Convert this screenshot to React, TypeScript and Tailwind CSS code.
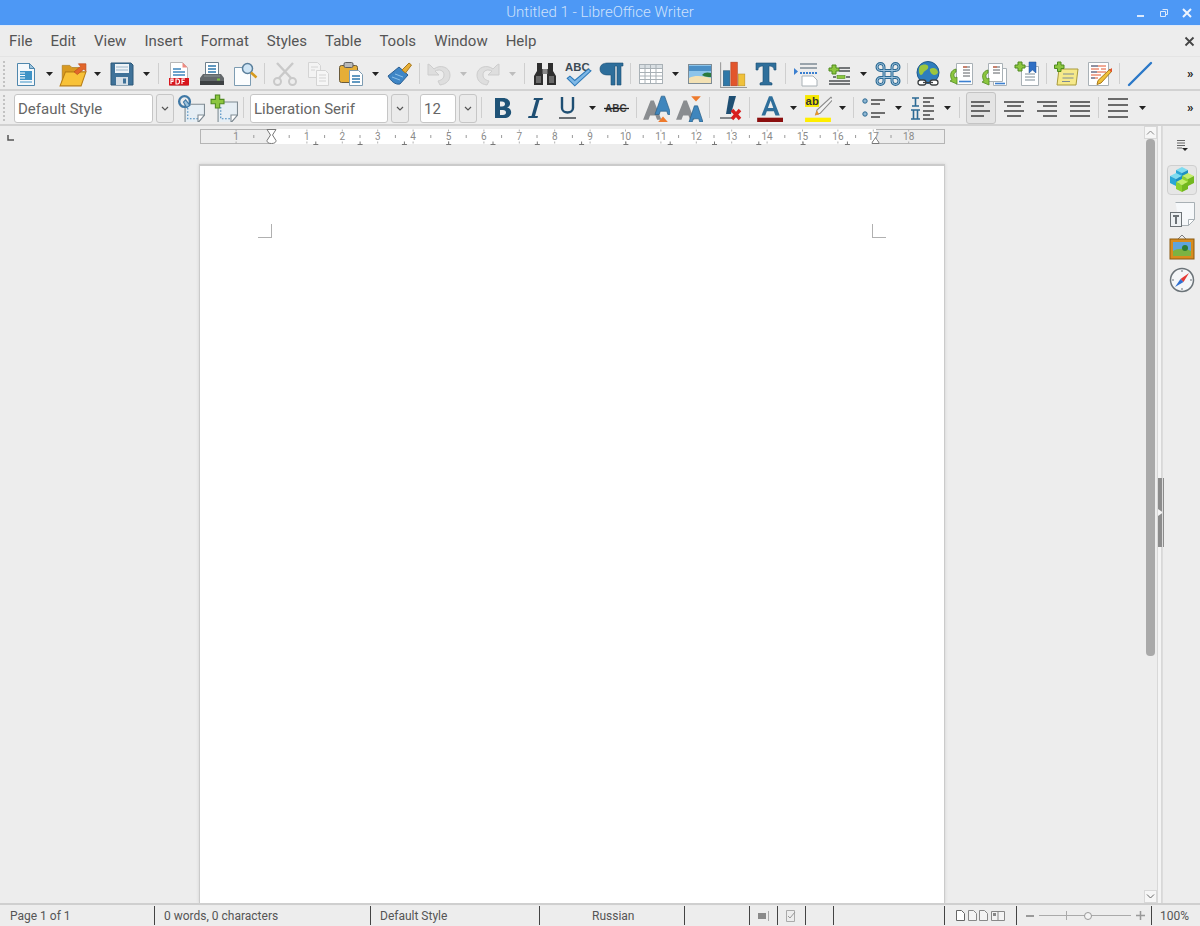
import type { ReactNode } from 'react'

const font = { fontFamily: 'Roboto, "Liberation Sans", sans-serif' }

function Ic({ children, size = 26 }: { children: ReactNode; size?: number }) {
  return (
    <svg width={size} height={size} viewBox="0 0 26 26" className="block">
      {children}
    </svg>
  )
}

function Btn({ children, active }: { children?: ReactNode; active?: boolean }) {
  return (
    <div className="w-[33px] h-[32px] flex items-center justify-center shrink-0">
      {active ? (
        <div className="w-[30px] h-[32px] flex items-center justify-center rounded-[3px] border border-[#c4c4c4] bg-[#e4e4e4]">
          {children}
        </div>
      ) : (
        children
      )}
    </div>
  )
}

function Caret({ off, w = 'w-[16px]' }: { off?: boolean; w?: string }) {
  return (
    <div className={`${w} h-[32px] flex items-center justify-center shrink-0`}>
      <svg width="7" height="4" viewBox="0 0 7 4">
        <path d="M0 0h7L3.5 4z" fill={off ? '#bdbdbd' : '#222'} />
      </svg>
    </div>
  )
}

function Sep({ w = 'w-[7px]' }: { w?: string }) {
  return (
    <div className={`${w} h-[32px] flex items-center justify-center shrink-0`}>
      <div className="w-px h-[21px] bg-[#cfcfcf]" />
    </div>
  )
}

function Grip({ w = 'w-[9px]' }: { w?: string }) {
  return (
    <div className={`${w} h-[26px] shrink-0 flex justify-start pl-[3px]`}>
      <div className="w-[2px] h-full border-l-2 border-dotted border-[#c2c2c2]" />
    </div>
  )
}

function More() {
  return (
    <div className="ml-auto w-[13px] text-[13px] font-bold text-[#222] leading-none tracking-[-1px]">»</div>
  )
}

function Combo({ text, w }: { text: string; w: string }) {
  return (
    <div className={`${w} flex shrink-0 gap-[3px] mt-[2px]`}>
      <div className="flex-1 h-[29px] rounded-[3px] border border-[#c6c6c6] bg-white px-[3px] text-[15px] leading-[29px] text-[#666] overflow-hidden whitespace-nowrap">
        {text}
      </div>
      <div className="w-[18px] h-[29px] rounded-[3px] border border-[#c6c6c6] bg-[#ebebeb] flex items-center justify-center">
        <svg width="8" height="5" viewBox="0 0 8 5">
          <path d="M1 1l3 3 3-3" fill="none" stroke="#555" strokeWidth="1.2" />
        </svg>
      </div>
    </div>
  )
}

/* toolbar icons */

const NewDoc = () => (
  <Ic>
    <path d="M4.500 2.500h12l5 5v17h-17z" fill="#f4f8fb" stroke="#4f87ad" />
    <path d="M16.500 2.500l5 5h-5z" fill="#9cc3dd" stroke="#4f87ad" />
    <rect x="7" y="10" width="12" height="9" fill="#3f93c6" />
    <path d="M7 12h5M7 14.500h5M7 17h5" stroke="#fff" />
    <path d="M7 21h12" stroke="#3f93c6" />
  </Ic>
)

const OpenFolder = () => (
  <Ic size={28}>
    <path d="M3 5h7l2 2h7v15H3z" fill="#d99a20" stroke="#a87614" strokeWidth=".6" />
    <path d="M6 11h19l-4.500 13H1z" fill="#f8c238" stroke="#b97e14" />
    <path d="M14 11l6-5-2-2.500h7v7l-2-2-6 5z" fill="#e2662a" stroke="#b9481a" strokeWidth=".6" />
  </Ic>
)

const Save = () => (
  <Ic>
    <path d="M2 2h20l2 2v20H2z" fill="#3f7299" stroke="#2c5878" />
    <rect x="6" y="3" width="14" height="9" fill="#eef3f7" />
    <path d="M7 6h12M7 9h12" stroke="#9bb6c9" />
    <rect x="7" y="16" width="12" height="8" fill="#d6dfe6" />
    <rect x="14" y="17.500" width="3" height="5" fill="#3f7299" />
  </Ic>
)

const Pdf = () => (
  <Ic>
    <path d="M4.500 1.500h12l5 5v18h-17z" fill="#fff" stroke="#b7b7b7" />
    <path d="M16.500 1.500v5h5z" fill="#f08a80" />
    <path d="M7 8h8M7 11h12M7 14h12" stroke="#3f86bd" strokeWidth="1.300" />
    <rect x="3" y="17" width="20" height="7.500" fill="#d9161d" />
    <path d="M5 23v-5h2v2.500H5M10 18v5h1.500a2 2.500 0 000-5zM16 23v-5h3M16 20.500h2.500" fill="none" stroke="#fff" strokeWidth="1.100" />
  </Ic>
)

const Printer = () => (
  <Ic>
    <path d="M6.500 1.500h13v13h-13z" fill="#fff" stroke="#6d7f8c" />
    <path d="M9 5h8M9 8h8M9 11h8" stroke="#2e78ad" strokeWidth="1.300" />
    <path d="M4 13h18l3 4v7H1v-7z" fill="#63686b" />
    <path d="M1 20h24v4H1z" fill="#3d4143" />
    <path d="M5 15h16" stroke="#8f9698" />
    <rect x="18" y="17.500" width="3" height="2" fill="#7bc043" />
  </Ic>
)

const Preview = () => (
  <Ic>
    <path d="M2.500 6.500h11l5 5v13h-16z" fill="#fbfdfe" stroke="#7d9cb2" />
    <circle cx="15.500" cy="7.500" r="5" fill="#cfe5f5" stroke="#5a7f9b" strokeWidth="1.500" />
    <path d="M19 11.500l5.500 5" stroke="#d69a1e" strokeWidth="2.500" />
  </Ic>
)

const Cut = () => (
  <Ic>
    <g stroke="#c9c9c9" fill="none">
      <path d="M5 2l14 15M21 2L7 17" strokeWidth="2.400" />
      <circle cx="5.500" cy="20.500" r="3.500" strokeWidth="2" />
      <circle cx="20.500" cy="20.500" r="3.500" strokeWidth="2" />
    </g>
  </Ic>
)

const Copy = () => (
  <Ic>
    <path d="M3.500 1.500h9l3 3v12h-12z" fill="#f3f3f3" stroke="#d4d4d4" />
    <path d="M11.500 9.500h9l3 3v12h-12z" fill="#f6f6f6" stroke="#d4d4d4" />
    <path d="M6 6h7M6 9h4M14 14h7M14 17h7M14 20h7" stroke="#d4d4d4" />
  </Ic>
)

const Paste = () => (
  <Ic>
    <rect x="1.500" y="4.500" width="18" height="17" rx="2" fill="#e6ae36" stroke="#6a5a3a" />
    <rect x="6" y="1.500" width="9" height="5" rx="1.500" fill="#b9b9b9" stroke="#5e5e5e" />
    <path d="M11.500 9.500h9l4 4v11h-13z" fill="#fff" stroke="#7d9cb2" />
    <path d="M14 15h8M14 18h8M14 21h8" stroke="#2e78ad" strokeWidth="1.300" />
  </Ic>
)

const Brush = () => (
  <Ic>
    <path d="M1 15l11-9 9 8-8 9c-5 1-9-3-12-8z" fill="#3f86c6" stroke="#2c5f91" />
    <path d="M5 16l8 3M8 13l8 3" stroke="#8cc0e8" />
    <path d="M15 9l7-7 2.500 2-6 8z" fill="#e6ae36" stroke="#a8781c" />
  </Ic>
)

const Undo = () => (
  <Ic>
    <path d="M2 3v11h11l-4-4c4-2 9-1 9 4 0 3-2 5-6 6l2 4c7-1 10-5 10-10 0-8-10-11-16-6L4 4z" fill="#dedede" stroke="#cdcdcd" />
  </Ic>
)

const Redo = () => (
  <Ic>
    <g transform="matrix(-1 0 0 1 26 0)">
      <path d="M2 3v11h11l-4-4c4-2 9-1 9 4 0 3-2 5-6 6l2 4c7-1 10-5 10-10 0-8-10-11-16-6L4 4z" fill="#dedede" stroke="#cdcdcd" />
    </g>
  </Ic>
)

const Binoculars = () => (
  <Ic>
    <path d="M5 2h5v6h6V2h5v8l3 5v9h-9V12h-4v12H2v-9l3-5z" fill="#2f2f2f" />
    <path d="M4 15h5v7H4zM17 15h5v7h-5z" fill="#6a6a6a" />
    <rect x="10.500" y="8" width="5" height="5" fill="#8a8a8a" />
  </Ic>
)

const Spell = () => (
  <Ic size={28}>
    <text x="1" y="10" fontSize="10.500" fontWeight="700" fill="#3c4a55" style={{ fontFamily: 'Liberation Sans' }}>ABC</text>
    <path d="M3 17l7 7L25 10l-2.500-1.500L10 19l-4.500-4z" fill="#7fb8e6" stroke="#2b78b8" />
  </Ic>
)

const Pilcrow = () => (
  <Ic>
    <path d="M10 2h15v3h-2v19h-4V5h-2v19h-4V14h-3C5 14 2 12 2 8s3-6 8-6z" fill="#2d6e9b" stroke="#1d4f73" strokeWidth=".6" />
  </Ic>
)

const TableIc = () => (
  <Ic>
    <rect x="1.500" y="3.500" width="23" height="19" fill="#fff" stroke="#a9b1b6" />
    <rect x="1.500" y="3.500" width="23" height="4" fill="#d9dfe3" stroke="#a9b1b6" />
    <path d="M1.500 11.500h23M1.500 15h23M1.500 18.500h23M7 3.500v19M12.500 3.500v19M18 3.500v19" stroke="#a9b1b6" />
  </Ic>
)

const ImageIc = () => (
  <Ic>
    <rect x="1.500" y="3.500" width="23" height="19" fill="#8cc4ea" stroke="#7d8b95" />
    <path d="M2 5h22v5H2z" fill="#4c90c6" />
    <path d="M2 17c6-3 14-2 22 0v5H2z" fill="#f3e1b3" />
    <path d="M15 14c2-3 6-3 9-2v4c-3 0-6 0-9-2z" fill="#2b7a3d" />
  </Ic>
)

const Chart = () => (
  <Ic size={28}>
    <path d="M1.500 2v23.500h25" fill="none" stroke="#9a9a9a" />
    <rect x="4" y="10" width="6" height="14" fill="#2f78a8" stroke="#1f4f70" strokeWidth=".5" />
    <rect x="11" y="2" width="6" height="22" fill="#e2552c" stroke="#a83a1a" strokeWidth=".5" />
    <rect x="18" y="13" width="6" height="11" fill="#f0c13a" stroke="#b58a1a" strokeWidth=".5" />
  </Ic>
)

const BigT = () => (
  <Ic>
    <path d="M3 2h20v7h-2c0-3-2-4-5-4v16l3 1v2H7v-2l3-1V5C7 5 5 6 5 9H3z" fill="#2f6f9b" stroke="#1d4f73" strokeWidth=".6" />
  </Ic>
)

const FieldIc = () => (
  <Ic>
    <path d="M1 7l4 3.500L1 14z" fill="#3b7fd0" />
    <path d="M7 3h17M7 7h17" stroke="#7d8b95" strokeWidth="1.500" />
    <path d="M7 12h17" stroke="#3b7fd0" strokeWidth="2" strokeDasharray="2 1" />
    <path d="M9 15h11l4 4v6H9z" fill="#fff" stroke="#a9b1b6" />
  </Ic>
)

const InsertLines = () => (
  <Ic>
    <path d="M6 4h4v3h3v3h-3v3H6v-3H3V7h3z" fill="#8cc63f" stroke="#4f8a1e" />
    <path d="M13 7h11M13 10h11M7 16h3M20 16h4M3 20h21M3 23h21" stroke="#4b4f52" strokeWidth="1.400" />
    <rect x="11" y="14.500" width="8" height="3" fill="#8cc63f" stroke="#4f8a1e" strokeWidth=".6" />
  </Ic>
)

const CmdIc = () => (
  <Ic>
    <path d="M9 9V6a3.500 3.500 0 10-3.500 3.500H20.500A3.500 3.500 0 1017 6v14a3.500 3.500 0 103.500-3.500H5.500A3.500 3.500 0 109 20z" fill="none" stroke="#2c6a94" strokeWidth="3" />
    <path d="M9 9V6a3.500 3.500 0 10-3.500 3.500H20.500A3.500 3.500 0 1017 6v14a3.500 3.500 0 103.500-3.500H5.500A3.500 3.500 0 109 20z" fill="none" stroke="#9dc2dc" strokeWidth="1" />
  </Ic>
)

const Globe = () => (
  <Ic>
    <circle cx="13" cy="11.500" r="11" fill="#2e7dbd" stroke="#205a8a" />
    <path d="M5 5c3-2 7-2 8 0s-1 4-3 5-2 4-4 4-3-6-1-9zM15 8c3-2 7-1 8 3 0 2-2 3-4 3s-5-4-4-6z" fill="#9cc63f" />
    <rect x="3" y="19" width="8" height="5" rx="2.500" fill="#fff" stroke="#3d4143" strokeWidth="1.300" />
    <rect x="15" y="19" width="8" height="5" rx="2.500" fill="#fff" stroke="#3d4143" strokeWidth="1.300" />
    <path d="M8 21.500h10" stroke="#3d4143" strokeWidth="1.300" />
  </Ic>
)

const Footnote = () => (
  <Ic>
    <path d="M8.500 2.500h16v21h-16z" fill="#fff" stroke="#a9b1b6" />
    <path d="M15 6h7M15 9h7M15 12h7M15 15h7" stroke="#5a5f62" />
    <path d="M15 6h4" stroke="#e2552c" />
    <path d="M11 20.500h12" stroke="#3b7fd0" strokeWidth="1.600" />
    <path d="M8 8c-5 1-7 6-4 11l-2 1 7 3v-7l-2 1c-2-3-1-5 1-6z" fill="#8cc63f" stroke="#4f8a1e" strokeWidth=".8" />
  </Ic>
)

const Endnote = () => (
  <Ic>
    <path d="M12.500 7.500h13v17h-13z" fill="#fff" stroke="#a9b1b6" />
    <path d="M7.500 2.500h14v18h-14z" fill="#fff" stroke="#a9b1b6" />
    <path d="M12 6h7M12 9h7M12 12h7" stroke="#5a5f62" />
    <path d="M12 6h4" stroke="#e2552c" />
    <path d="M14 22.500h10" stroke="#3b7fd0" strokeWidth="1.600" />
    <path d="M7 9C2 10 0 15 3 20l-2 1 7 3v-7l-2 1c-2-3-1-5 1-6z" fill="#8cc63f" stroke="#4f8a1e" strokeWidth=".8" />
  </Ic>
)

const Bookmark = () => (
  <Ic>
    <path d="M7.500 5.500h17v19h-17z" fill="#fff" stroke="#a9b1b6" />
    <path d="M11 13h10M11 16h10M11 19h10" stroke="#7d8b95" />
    <path d="M15 1h7v11l-3.500-3-3.500 3z" fill="#2f6fc4" stroke="#1f4f90" strokeWidth=".5" />
    <path d="M4 1h4v3h3v3H8v3H4V7H1V4h3z" fill="#8cc63f" stroke="#4f8a1e" />
  </Ic>
)

const Comment = () => (
  <Ic>
    <path d="M6 8h19l-2 16H4z" fill="#f6e98a" stroke="#a89a3a" />
    <path d="M10 13h11M9.500 17h11M9 20.500h8" stroke="#7d8b95" strokeWidth="1.200" />
    <path d="M4.500 1h3.500v3h3v3.500H8v3H4.500v-3h-3V4h3z" fill="#8cc63f" stroke="#4f8a1e" />
  </Ic>
)

const TrackEdit = () => (
  <Ic>
    <path d="M2.500 1.500h20v23h-20z" fill="#fff" stroke="#a9b1b6" />
    <path d="M5 5h15M5 8h8M15 8h5M5 11h15M5 14h10M5 17h7" stroke="#e2552c" />
    <path d="M5 5h7M5 11h6M5 17h4" stroke="#2e78ad" />
    <path d="M24 8l2 2-11 12-4 1.500 1-4z" fill="#f0c13a" stroke="#a8781c" />
    <path d="M23 9l3-2 1 3-2 1z" fill="#e2552c" />
  </Ic>
)

const LineIc = () => (
  <Ic>
    <path d="M2 24L24 2" stroke="#2b78c8" strokeWidth="2.400" strokeLinecap="round" />
  </Ic>
)

const ParaStyle = () => (
  <Ic size={28}>
    <path d="M7.500 9.500h18v10l-6 7h-12z" fill="#e6eef4" stroke="#7f8b93" />
    <path d="M10 13v10h12" fill="none" stroke="#3f86bd" strokeDasharray="1.500 1.500" />
    <path d="M25.500 19.500h-6v7z" fill="#fff" stroke="#7f8b93" />
    <circle cx="7" cy="7" r="5" fill="none" stroke="#3f78a5" strokeWidth="2.200" />
    <path d="M8 5.500l4 5-3 2-3-5z" fill="#9dc2dc" stroke="#3f78a5" />
  </Ic>
)

const NewStyle = () => (
  <Ic size={28}>
    <path d="M7.500 7.500h18v12l-6 7h-12z" fill="#e6eef4" stroke="#7f8b93" />
    <path d="M10 12v11h12" fill="none" stroke="#3f86bd" strokeDasharray="1.500 1.500" />
    <path d="M25.500 19.500h-6v7z" fill="#fff" stroke="#7f8b93" />
    <path d="M5 1h4v4h4v4H9v4H5V9H1V5h4z" fill="#8cc63f" stroke="#4f8a1e" />
  </Ic>
)

const Bold = () => (
  <Ic>
    <path d="M6 3h8c8 0 9 8 4 9.500 6 1 6 10.500-3 10.500H6zM11 6.500v5h2c4 0 4-5 0-5zM11 15v5h3c4 0 4-5 0-5z" fill="#1f5377" fillRule="evenodd" />
  </Ic>
)

const Italic = () => (
  <Ic>
    <path d="M12 3h9l-.5 2h-3L13 21h3l-.5 2H6l.5-2h3L14 5h-2.500z" fill="#1f4f73" />
  </Ic>
)

const Underline = () => (
  <Ic>
    <path d="M7 2v11c0 6 11 6 11 0V2" fill="none" stroke="#1f4f73" strokeWidth="2.400" />
    <path d="M4 23h17" stroke="#6a6f73" strokeWidth="2" />
  </Ic>
)

const Strike = () => (
  <Ic>
    <text x="1" y="17" fontSize="10" fontWeight="700" fill="#3a3a3a" style={{ fontFamily: 'Liberation Sans' }}>ABC</text>
    <path d="M0 13.500h25" stroke="#222" strokeWidth="1.300" />
  </Ic>
)

const GrowFont = () => (
  <Ic size={28}>
    <path d="M1 24L8 6h3l7 18h-4l-1.500-4h-5L6 24z" fill="#8a8d90" />
    <path d="M12 19l6-17h3l6 17h-3l-1-3h-6l-1 3z" fill="#3f86bd" stroke="#245a82" strokeWidth=".6" />
    <path d="M15 26l4.500-5 4.500 5z" fill="#ee7a2c" />
  </Ic>
)

const ShrinkFont = () => (
  <Ic size={28}>
    <path d="M1 24L8 6h3l7 18h-4l-1.500-4h-5L6 24z" fill="#8a8d90" />
    <path d="M13 26l5-15h3l5 15h-3l-1-3h-5l-1 3z" fill="#3f86bd" stroke="#245a82" strokeWidth=".6" />
    <path d="M15 2h9l-4.500 5z" fill="#ee7a2c" />
  </Ic>
)

const ClearFmt = () => (
  <Ic>
    <path d="M11 1h7l-5 18H8z" fill="#1f4f73" />
    <path d="M2 23h14" stroke="#6a6f73" strokeWidth="1.600" />
    <path d="M14 15l8 9M22 15l-8 9" stroke="#d81e1e" strokeWidth="3.400" />
  </Ic>
)

const FontColor = () => (
  <Ic size={28}>
    <path d="M6 20l7-18h3l7 18h-4l-1.500-4h-6.500L9.500 20zM12 13h5l-2.500-7z" fill="#2f6f9b" fillRule="evenodd" />
    <rect x="2" y="22" width="24" height="4.500" fill="#8b0f0f" />
  </Ic>
)

const Highlight = () => (
  <Ic size={28}>
    <rect x="1" y="1" width="13" height="11" fill="#f6e800" />
    <text x="1.500" y="10" fontSize="10.500" fontWeight="700" fill="#333" style={{ fontFamily: 'Liberation Sans' }}>ab</text>
    <path d="M25 3l2 2-12 13-4 1 1-4z" fill="#f3f3f3" stroke="#8a8a8a" />
    <path d="M12 15l-2 5 4-1z" fill="#e8962a" />
    <rect x="1" y="22" width="24" height="5" fill="#ffee00" />
  </Ic>
)

const Bullets = () => (
  <Ic>
    <circle cx="4" cy="6" r="2.200" fill="#8fb6d2" stroke="#2c6a94" />
    <circle cx="4" cy="19" r="2.200" fill="#8fb6d2" stroke="#2c6a94" />
    <path d="M10 5h14M10 9h9M10 18h14M10 22h9" stroke="#444" strokeWidth="1.500" />
  </Ic>
)

const Numbers = () => (
  <Ic>
    <path d="M2 3h7M5.500 3v8M2 11h7" stroke="#2c6a94" strokeWidth="1.600" />
    <path d="M1 15h9M3.500 15v9M7.500 15v9M1 24h9" stroke="#2c6a94" strokeWidth="1.600" />
    <path d="M13 3h11M13 7h7M13 11h11M13 16h11M13 20h7M13 24h11" stroke="#444" strokeWidth="1.500" />
  </Ic>
)

function Align({ lines }: { lines: string }) {
  return (
    <Ic>
      <path d={lines} stroke="#3f3f3f" strokeWidth="1.500" />
    </Ic>
  )
}

const Spacing = () => (
  <Ic>
    <path d="M3 4h20M3 10h20M3 16h20M3 22h20" stroke="#3f3f3f" strokeWidth="1.600" />
  </Ic>
)

/* sidebar icons */

function Cube({ x, y, top, left, right }: { x: number; y: number; top: string; left: string; right: string }) {
  return (
    <g transform={`translate(${x} ${y})`}>
      <path d="M6 0l6 3-6 3-6-3z" fill={top} />
      <path d="M0 3l6 3v7l-6-3z" fill={left} />
      <path d="M12 3l-6 3v7l6-3z" fill={right} />
    </g>
  )
}

const Gallery = () => (
  <Ic>
    <Cube x={7} y={0} top="#7fdcf0" left="#2aa7d6" right="#1e8fc2" />
    <Cube x={1} y={6} top="#7fdcf0" left="#2aa7d6" right="#1e8fc2" />
    <Cube x={13} y={6} top="#c4ee6a" left="#8fd12e" right="#73b81e" />
    <Cube x={7} y={12} top="#c4ee6a" left="#8fd12e" right="#73b81e" />
  </Ic>
)

const StylesSide = () => (
  <Ic>
    <path d="M6.500 1.500h19v17l-6 6h-9" fill="#f6f8fa" stroke="#a8b0b5" />
    <path d="M25.500 18.500h-6v6z" fill="#fff" stroke="#a8b0b5" />
    <rect x="1.500" y="11.500" width="11" height="14" fill="#eef1f3" stroke="#6c7276" />
    <path d="M4 15h6M7 15v8" stroke="#6c7276" strokeWidth="2" />
  </Ic>
)

const Picture = () => (
  <Ic>
    <path d="M9 5l4-4 4 4" fill="none" stroke="#7f7f7f" />
    <rect x="1" y="5" width="24" height="20" fill="#d88c1e" stroke="#8a5a12" />
    <rect x="4" y="8" width="18" height="14" fill="#5fa4dc" />
    <path d="M4 17c5-3 12-3 18 0v5H4z" fill="#7cb342" />
    <circle cx="16" cy="14" r="3" fill="#2e7d32" />
  </Ic>
)

const Compass = () => (
  <Ic>
    <circle cx="13" cy="13" r="11.500" fill="#f4f6f8" stroke="#6b7378" strokeWidth="1.500" />
    <path d="M20 6l-5.500 9-3-3z" fill="#e53935" />
    <path d="M6 20l5.500-8 3 3z" fill="#2f6fd0" />
    <path d="M13 3v2M13 21v2M3 13h2M21 13h2" stroke="#6b7378" />
  </Ic>
)

/* ruler */

function Ruler() {
  const unit = 35.4
  const zero = 71.5
  const marks = Array.from({ length: 39 }, (_, i) => i - 2)
  return (
    <svg width="746" height="20" viewBox="0 0 746 20" className="block">
      <rect x=".5" y="3.500" width="744" height="14" fill="#ededed" stroke="#b5b5b5" />
      <rect x="71" y="3" width="605" height="15" fill="#fff" />
      {marks.map((m) => {
        const x = zero + (m * unit) / 2
        if (x < 4 || x > 742 || m === 0) return null
        if (m % 2 !== 0) {
          return <path key={m} d={`M${x} 9v3`} stroke="#9a9a9a" />
        }
        return (
          <g key={m}>
            <path d={`M${x} 3.500v2M${x} 15.500v2`} stroke="#b0b0b0" />
            <text x={x} y="14" textAnchor="middle" fontSize="10" fill="#8a8a8a" style={font}>
              {Math.abs(m / 2)}
            </text>
          </g>
        )
      })}
      {Array.from({ length: 13 }, (_, i) => 71.5 + 44.3 * (i + 1)).map((x) => (
        <path key={x} d={`M${x - 2.500} 18.500h5M${x} 18.500v-3`} stroke="#777" />
      ))}
      <path d="M67 3.500h9l-3.500 5.500 3.500 5.500q0 3-4.500 3t-4.500-3l3.500-5.500z" fill="#fff" stroke="#777" />
      <path d="M672 17.500c0-2 2-3 3.500-6 1.500 3 3.500 4 3.500 6z" fill="#fff" stroke="#777" />
    </svg>
  )
}

export default function App() {
  const menus = ['File', 'Edit', 'View', 'Insert', 'Format', 'Styles', 'Table', 'Tools', 'Window', 'Help']

  return (
    <div className="w-[1200px] h-[926px] flex flex-col bg-[#ededed] overflow-hidden" style={font}>
      {/* Title bar */}
      <div className="h-[25px] shrink-0 bg-[#4d98f5] flex items-center justify-center relative">
        <span className="text-[15px] text-[#cfe2fb] font-light">Untitled 1 - LibreOffice Writer</span>
        <div className="absolute right-[7px] top-0 h-full flex items-center gap-[11px]">
          <svg width="12" height="12" viewBox="0 0 12 12">
            <path d="M2 9h7" stroke="#dbe9fc" strokeWidth="2" />
          </svg>
          <svg width="12" height="12" viewBox="0 0 12 12">
            <path d="M4.500 2.500h5v5h-2M2.500 4.500h5v5h-5z" fill="none" stroke="#dbe9fc" />
          </svg>
          <svg width="12" height="12" viewBox="0 0 12 12">
            <path d="M2 2l8 8M10 2l-8 8" stroke="#eef5fe" strokeWidth="2" />
          </svg>
        </div>
      </div>

      {/* Menu */}
      <div className="h-[31px] shrink-0 flex items-center pl-[9px] pr-[6px] gap-[18px] text-[15px] text-[#555] border-t border-[#dfe9f7]">
        {menus.map((m) => (
          <span key={m}>{m}</span>
        ))}
        <svg width="11" height="11" viewBox="0 0 11 11" className="ml-auto mr-[-1px]">
          <path d="M1.500 1.500l8 8M9.500 1.500l-8 8" stroke="#444" strokeWidth="1.800" />
        </svg>
      </div>

      {/* Standard toolbar */}
      <div className="h-[35px] shrink-0 flex items-center border-t border-[#e4e4e4] border-b-2 border-b-[#d2d2d2] pt-[1px]">
        <Grip />
        <Btn><NewDoc /></Btn>
        <Caret w="w-[14px]" />
        <Btn><OpenFolder /></Btn>
        <Caret />
        <Btn><Save /></Btn>
        <Caret />
        <Sep w="w-[8px]" />
        <Btn><Pdf /></Btn>
        <Btn><Printer /></Btn>
        <Btn><Preview /></Btn>
        <Sep />
        <Btn><Cut /></Btn>
        <Btn><Copy /></Btn>
        <Btn><Paste /></Btn>
        <Caret />
        <Btn><Brush /></Btn>
        <Sep w="w-[6px]" />
        <Btn><Undo /></Btn>
        <Caret off />
        <Btn><Redo /></Btn>
        <Caret off />
        <Sep w="w-[8px]" />
        <Btn><Binoculars /></Btn>
        <Btn><Spell /></Btn>
        <Btn><Pilcrow /></Btn>
        <Sep />
        <Btn><TableIc /></Btn>
        <Caret />
        <Btn><ImageIc /></Btn>
        <Btn><Chart /></Btn>
        <Btn><BigT /></Btn>
        <Sep />
        <Btn><FieldIc /></Btn>
        <Btn><InsertLines /></Btn>
        <Caret />
        <Btn><CmdIc /></Btn>
        <Sep />
        <Btn><Globe /></Btn>
        <Btn><Footnote /></Btn>
        <Btn><Endnote /></Btn>
        <Btn><Bookmark /></Btn>
        <Sep w="w-[6px]" />
        <Btn><Comment /></Btn>
        <Btn><TrackEdit /></Btn>
        <Sep w="w-[8px]" />
        <Btn><LineIc /></Btn>
        <More />
      </div>

      {/* Formatting toolbar */}
      <div className="h-[35px] shrink-0 flex items-center border-b-2 border-b-[#d2d2d2]">
        <Grip w="w-[14px]" />
        <Combo text="Default Style" w="w-[160px]" />
        <Btn><ParaStyle /></Btn>
        <Btn><NewStyle /></Btn>
        <Sep />
        <div className="w-[3px] shrink-0" />
        <Combo text="Liberation Serif" w="w-[159px]" />
        <div className="w-[11px] shrink-0" />
        <Combo text="12" w="w-[57px]" />
        <Sep w="w-[8px]" />
        <Btn><Bold /></Btn>
        <Btn><Italic /></Btn>
        <Btn><Underline /></Btn>
        <Caret />
        <Btn><Strike /></Btn>
        <Sep w="w-[6px]" />
        <Btn><GrowFont /></Btn>
        <Btn><ShrinkFont /></Btn>
        <Sep w="w-[9px]" />
        <Btn><ClearFmt /></Btn>
        <Sep w="w-[5px]" />
        <Btn><FontColor /></Btn>
        <Caret />
        <Btn><Highlight /></Btn>
        <Caret />
        <Sep />
        <Btn><Bullets /></Btn>
        <Caret />
        <Btn><Numbers /></Btn>
        <Caret />
        <Sep w="w-[9px]" />
        <Btn active><Align lines="M3 7h19M3 11h13M3 16h19M3 21h13" /></Btn>
        <Btn><Align lines="M3 7h20M6 11h14M3 16h20M6 21h14" /></Btn>
        <Btn><Align lines="M3 7h20M9 11h14M3 16h20M9 21h14" /></Btn>
        <Btn><Align lines="M3 7h20M3 11h20M3 16h20M3 21h20" /></Btn>
        <Sep w="w-[5px]" />
        <Btn><Spacing /></Btn>
        <Caret />
        <More />
      </div>

      {/* Workspace */}
      <div className="flex-1 min-h-0 flex">
        <div className="flex-1 min-w-0 flex flex-col">
          <div className="h-[21px] shrink-0 flex">
            <div className="w-[200px] shrink-0 pl-[7px] pt-[9px]">
              <svg width="7" height="6" viewBox="0 0 7 6" className="block">
                <path d="M1 0v5h6" fill="none" stroke="#555" strokeWidth="1.500" />
              </svg>
            </div>
            <Ruler />
          </div>
          <div className="flex-1 min-h-0 mt-[17px] ml-[199px] w-[746px] bg-white border-t-2 border-l border-r border-[#cbcbcb] shadow-[0_0_3px_#d0d0d0] pt-[58px] pl-[58px] pr-[58px] flex justify-between items-start">
            <div className="w-[14px] h-[14px] border-r border-b border-[#b0b0b0]" />
            <div className="w-[14px] h-[14px] border-l border-b border-[#b0b0b0]" />
          </div>
        </div>

        {/* Scrollbar */}
        <div className="w-[13px] shrink-0 flex flex-col">
          <div className="h-[13px] bg-[#f6f6f6] border border-[#d8d8d8] flex items-center justify-center">
            <svg width="9" height="5" viewBox="0 0 9 5">
              <path d="M1 4.500l3.500-3.500 3.500 3.500" fill="none" stroke="#888" />
            </svg>
          </div>
          <div className="flex-1 min-h-0 flex flex-col px-[2px]">
            <div className="h-[517px] bg-[#a9a9a9] rounded-[4px]" />
          </div>
          <div className="h-[13px] bg-[#f6f6f6] border border-[#d8d8d8] flex items-center justify-center">
            <svg width="9" height="5" viewBox="0 0 9 5">
              <path d="M1 .5l3.500 3.500 3.500-3.500" fill="none" stroke="#666" />
            </svg>
          </div>
        </div>

        {/* Sidebar handle */}
        <div className="w-[5px] shrink-0 border-l border-r border-[#d8d8d8] bg-[#f4f4f4] flex items-center">
          <div className="w-[6px] h-[69px] shrink-0 bg-[#8c8c8c] mt-[-4px] flex items-center">
            <svg width="5" height="7" viewBox="0 0 5 7">
              <path d="M0 0l5 3.500-5 3.500z" fill="#f4f4f4" />
            </svg>
          </div>
        </div>

        {/* Sidebar */}
        <div className="w-[38px] shrink-0 flex flex-col items-center pt-[13px] border-l border-[#dcdcdc]">
          <svg width="12" height="13" viewBox="0 0 12 13" className="block mb-[13px]">
            <path d="M1 1.500h8M1 4h8M1 6.500h8M1 9h5" stroke="#666" />
            <path d="M6 9h6l-3 3z" fill="#222" />
          </svg>
          <div className="w-[30px] h-[30px] rounded-[4px] border border-[#cfcfcf] bg-[#e6e6e6] flex items-center justify-center mb-[2px]">
            <Gallery />
          </div>
          <div className="h-[33px] flex items-center"><StylesSide /></div>
          <div className="h-[33px] flex items-center"><Picture /></div>
          <div className="h-[33px] flex items-center"><Compass /></div>
        </div>
      </div>

      {/* Status bar */}
      <div className="h-[23px] shrink-0 border-t-2 border-[#cfcfcf] flex items-center text-[12px] text-[#555]">
        <div className="w-[155px] shrink-0 h-[19px] pl-[10px] leading-[21px] border-r border-[#444]">Page 1 of 1</div>
        <div className="w-[216px] shrink-0 h-[19px] pl-[9px] leading-[21px] border-r border-[#444]">0 words, 0 characters</div>
        <div className="w-[169px] shrink-0 h-[19px] pl-[9px] leading-[21px] border-r border-[#444]">Default Style</div>
        <div className="w-[145px] shrink-0 h-[19px] pl-[52px] leading-[21px] border-r border-[#444]">Russian</div>
        <div className="w-[65px] shrink-0 h-[19px] border-r border-[#444]" />
        <div className="w-[28px] shrink-0 h-[19px] border-r border-[#444] flex items-center justify-center">
          <svg width="12" height="10" viewBox="0 0 12 10">
            <rect x="0" y="2" width="8" height="6" fill="#8a8a8a" />
            <path d="M10.500 0v10" stroke="#aaa" />
          </svg>
        </div>
        <div className="w-[28px] shrink-0 h-[19px] border-r border-[#444] flex items-center justify-center">
          <svg width="11" height="12" viewBox="0 0 11 12">
            <path d="M.5.5h8v11h-8z" fill="none" stroke="#aaa" />
            <path d="M2 6l2 2 5-6" fill="none" stroke="#999" />
          </svg>
        </div>
        <div className="w-[28px] shrink-0 h-[19px] border-r border-[#444]" />
        <div className="w-[111px] shrink-0 h-[19px] border-r border-[#444]" />
        <div className="w-[72px] shrink-0 h-[19px] border-r border-[#444] flex items-center justify-center gap-[3px]">
          <svg width="9" height="11" viewBox="0 0 9 11">
            <path d="M.5.5h5l3 3v7h-8z" fill="#fff" stroke="#666" />
          </svg>
          <svg width="20" height="11" viewBox="0 0 20 11">
            <path d="M.5.5h5l3 3v7h-8zM11.500.5h5l3 3v7h-8z" fill="#f4f4f4" stroke="#888" />
          </svg>
          <svg width="14" height="11" viewBox="0 0 14 11">
            <path d="M.5 1.500h13v9H.5zM7 1.500v9" fill="#f4f4f4" stroke="#888" />
            <path d="M2 3h3v3H2z" fill="#888" />
          </svg>
        </div>
        <div className="w-[135px] shrink-0 h-[19px] border-r border-[#444] flex items-center pl-[9px]">
          <span className="w-[8px] h-[2px] bg-[#999]" />
          <div className="ml-[5px] w-[92px] h-px bg-[#aaa] flex items-center">
            <span className="ml-[27px] w-px h-[9px] bg-[#aaa]" />
            <span className="ml-[17px] w-[8px] h-[8px] rounded-full border border-[#999] bg-[#f4f4f4]" />
          </div>
          <svg width="9" height="9" viewBox="0 0 9 9" className="ml-[5px]">
            <path d="M4.500 0v9M0 4.500h9" stroke="#999" strokeWidth="1.500" />
          </svg>
        </div>
        <div className="flex-1 pl-[8px] leading-[21px] h-[19px]">100%</div>
      </div>
    </div>
  )
}
